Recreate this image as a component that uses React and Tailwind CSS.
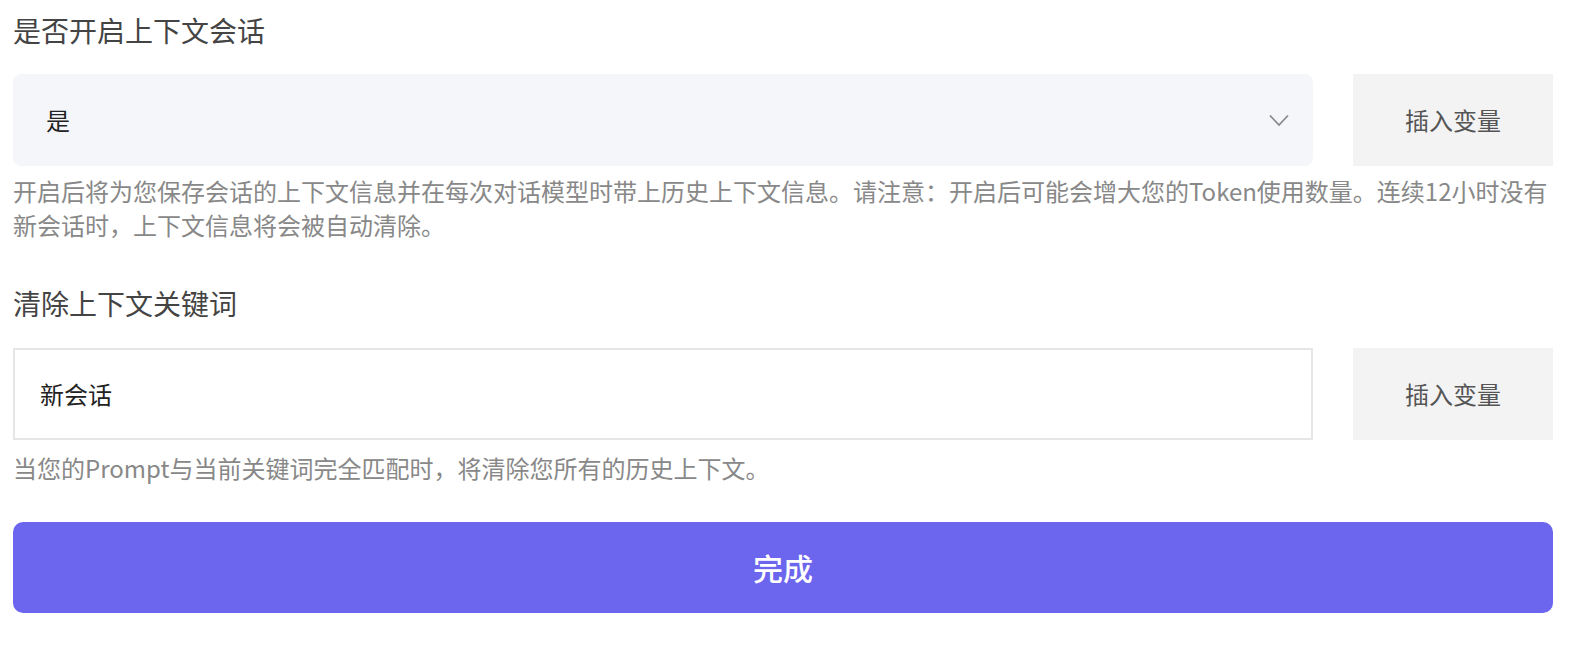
import { useState } from "react";

function InsertButton() {
  return (
    <button className="w-[200px] shrink-0 bg-[#f3f3f3] text-[#555] text-[24px] flex items-center justify-center">
      插入变量
    </button>
  );
}

export default function App() {
  const [keyword, setKeyword] = useState("新会话");

  return (
    <div
      className="min-h-screen bg-white pl-[13px] pr-[33px] pt-[10px]"
      style={{ fontFamily: '"Noto Sans CJK SC", "Noto Sans", sans-serif' }}
    >
      <div className="w-[1540px]">
        {/* 上下文会话 */}
        <div className="text-[28px] leading-[40px] text-[#444]">是否开启上下文会话</div>
        <div className="flex gap-[40px] mt-[24px] h-[92px]">
          <div className="flex-1 bg-[#f5f6fa] rounded-[8px] flex items-center justify-between pl-[33px] pr-[24px]">
            <span className="text-[24px] text-[#222]">是</span>
            <svg width="20" height="13" viewBox="0 0 20 13" fill="none">
              <path d="M1 1.5L10 11L19 1.5" stroke="#8a8a8a" strokeWidth="1.8" />
            </svg>
          </div>
          <InsertButton />
        </div>
        <p className="mt-[8px] text-[24px] leading-[34px] text-[#888]">
          开启后将为您保存会话的上下文信息并在每次对话模型时带上历史上下文信息。请注意：开启后可能会增大您的Token使用数量。连续12小时没有新会话时，上下文信息将会被自动清除。
        </p>

        {/* 清除关键词 */}
        <div className="mt-[41px] text-[28px] leading-[40px] text-[#444]">清除上下文关键词</div>
        <div className="flex gap-[40px] mt-[25px] h-[92px]">
          <input
            value={keyword}
            onChange={(e) => setKeyword(e.target.value)}
            className="flex-1 border-2 border-[#e6e6e6] pl-[25px] text-[24px] text-[#222] outline-none"
          />
          <InsertButton />
        </div>
        <p className="mt-[11px] text-[24px] leading-[34px] text-[#888]">
          当您的Prompt与当前关键词完全匹配时，将清除您所有的历史上下文。
        </p>

        <button className="mt-[37px] w-full h-[91px] rounded-[10px] bg-[#6c66ee] text-white text-[30px] font-medium">
          完成
        </button>
      </div>
    </div>
  );
}
